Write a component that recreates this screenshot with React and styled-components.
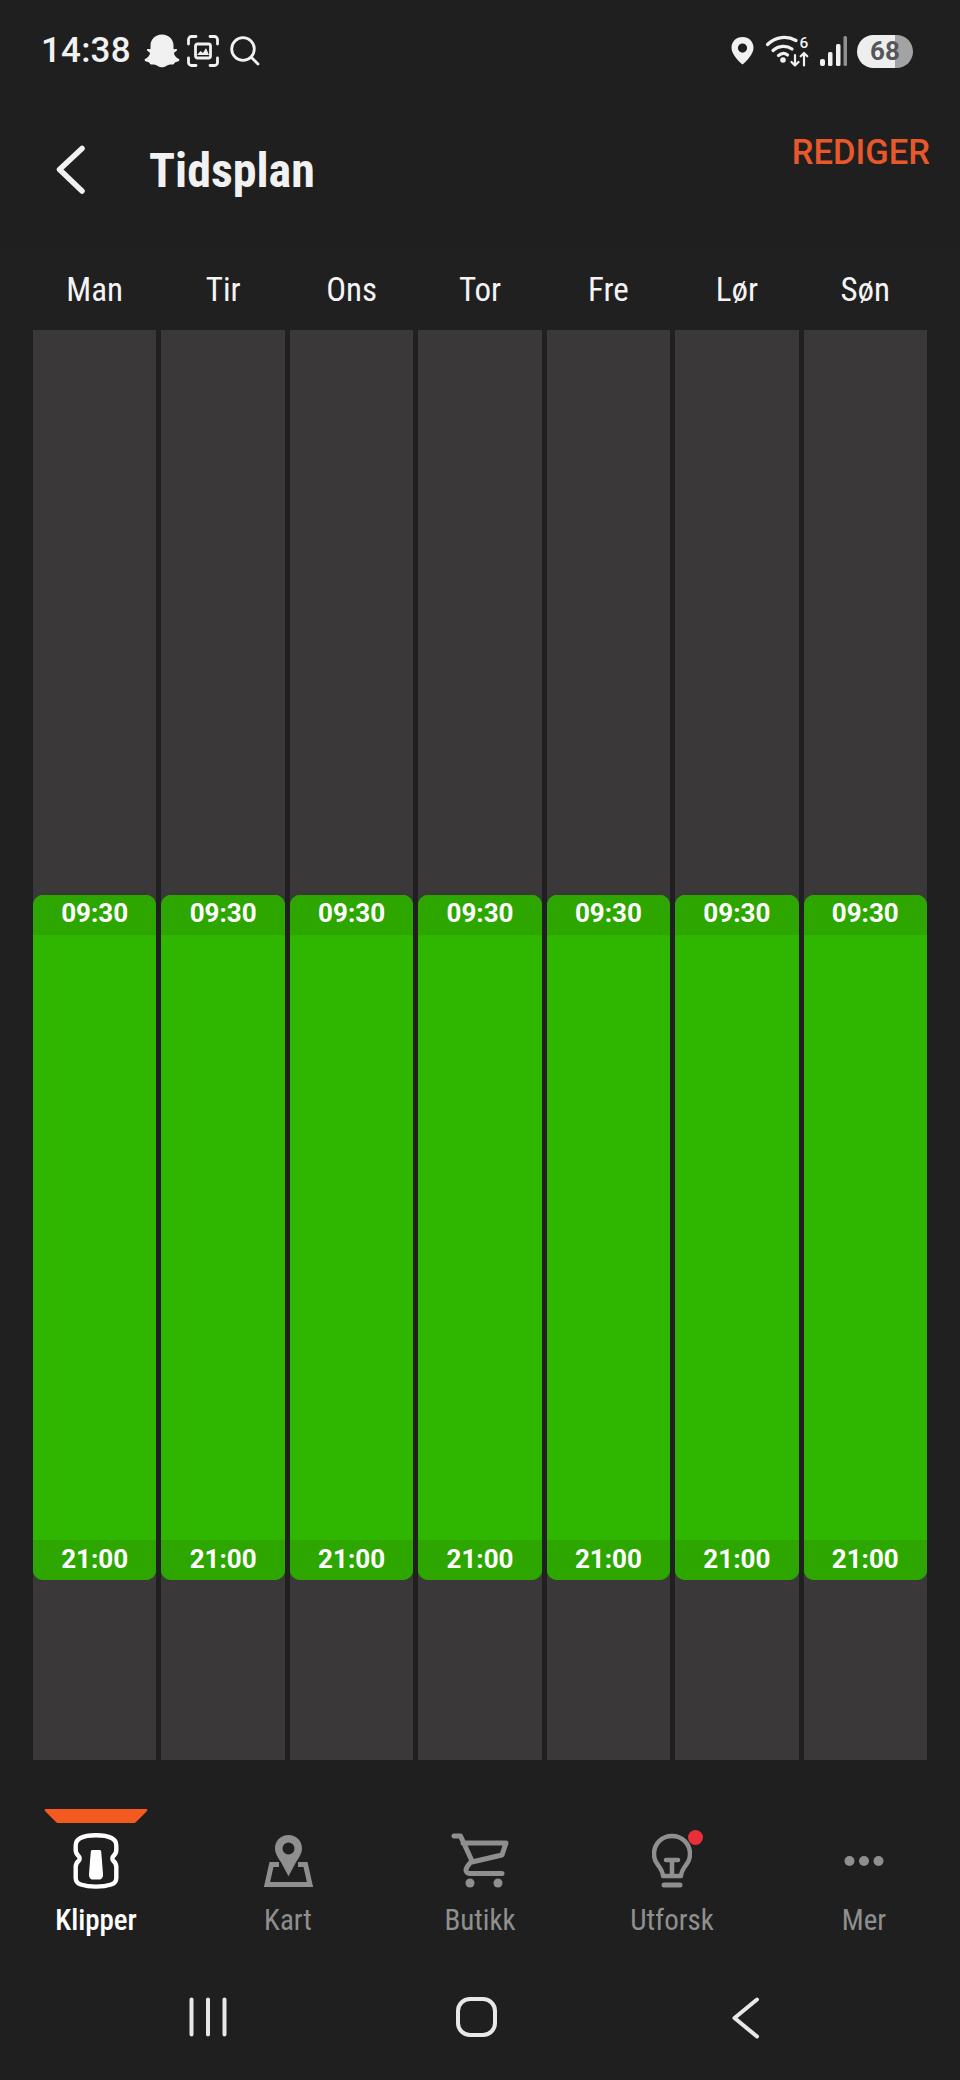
import React from "react";
import styled, { createGlobalStyle } from "styled-components";

const Global = createGlobalStyle`
  html, body { margin: 0; padding: 0; background: #1f1f1f; }
  #root { width: 960px; height: 2080px; overflow: hidden; }
`;

const Screen = styled.div`
  width: 960px; height: 2080px; display: flex; flex-direction: column;
  background: #1f1f1f; font-family: Roboto, "Liberation Sans", sans-serif; color: #f1f1f1;
`;
const StatusBar = styled.div`
  height: 100px; box-sizing: border-box; padding: 34px 47px 0 41px;
  display: flex; align-items: flex-start; justify-content: space-between;
`;
const StatusGroup = styled.div`display: flex; align-items: center; height: 34px;`;
const Clock = styled.span`font-size: 35px; font-weight: 500; line-height: 34px; width: 103px; letter-spacing: 0.2px;`;
const Ic = styled.svg`display: block; flex: none; margin-left: ${p => p.$ml || 0}px;`;
const Battery = styled.div`
  margin-left: 9px; width: 56px; height: 33px; border-radius: 17px; display: flex; align-items: center; justify-content: center;
  background: linear-gradient(90deg, #eeeeee 0 68%, #a3a3a3 68% 100%);
  color: #55555b; font-size: 26px; font-weight: 700;
`;
const Header = styled.div`
  height: 150px; box-sizing: border-box; padding: 0 30px 0 56px; display: flex; align-items: flex-start;
`;
const Back = styled.svg`display: block; margin-top: 45px; flex: none;`;
const Title = styled.h1`
  margin: 43px 0 0 63px; font-family: "Roboto Condensed", "Liberation Sans Narrow", Roboto, sans-serif;
  font-size: 48px; line-height: 56px; font-weight: 700; color: #f1f1f1;
`;
const Edit = styled.span`
  margin: 30px 0 0 auto; font-size: 34.5px; line-height: 44px; font-weight: 500; color: #e8582a;
`;
const Days = styled.div`
  height: 80px; box-sizing: border-box; padding: 0 33px; display: grid; grid-template-columns: repeat(7, 1fr); column-gap: 5px;
  background: #212021;
`;
const Day = styled.div`
  text-align: center; font-family: "Roboto Condensed", "Liberation Sans Narrow", Roboto, sans-serif; font-size: 33px; line-height: 40px; padding-top: 20px; color: #f4f4f4;
`;
const Grid = styled.div`
  height: 1430px; box-sizing: border-box; padding: 0 33px; display: grid; grid-template-columns: repeat(7, 1fr); column-gap: 5px;
  background: #212021;
`;
const Column = styled.div`
  display: flex; flex-direction: column; background: #3a3839;
`;
const Idle = styled.div`height: ${p => p.$h}px; flex: none;`;
const Active = styled.div`
  height: 685px; flex: none; display: flex; flex-direction: column; justify-content: space-between;
  background: #2fb700; border-radius: 10px; overflow: hidden;
`;
const Stamp = styled.div`
  height: 40px; box-sizing: border-box; padding-bottom: ${p => p.$lift}px; display: flex; align-items: center; justify-content: center;
  background: #2da700; color: #fff; font-size: 26px; font-weight: 700;
`;
const Nav = styled.div`
  height: 172px; box-sizing: border-box; padding-top: 49px; display: grid; grid-template-columns: repeat(5, 1fr); background: #1f1f1f;
`;
const Tab = styled.div`
  display: flex; flex-direction: column; align-items: center; position: relative; padding-top: 23px;
  color: ${p => (p.$active ? "#ffffff" : "#8f8f8f")};
`;
const Indicator = styled.svg`position: absolute; top: 0; left: 44px;`;
const IconSlot = styled.div`height: 57px; display: flex; align-items: center; justify-content: center; position: relative;`;
const Dot = styled.span`
  position: absolute; top: -2px; right: -11px; width: 15px; height: 15px; border-radius: 50%; background: #e8303a;
`;
const TabLabel = styled.span`
  margin-top: 13px; font-family: "Roboto Condensed", "Liberation Sans Narrow", Roboto, sans-serif;
  font-size: 29px; line-height: 36px; font-weight: ${p => (p.$active ? 500 : 400)};
`;
const SystemBar = styled.div`
  flex: 1; display: flex; align-items: flex-start; padding-top: 65px; box-sizing: border-box;
`;
const SysSlot = styled.div`margin-left: ${p => p.$ml}px; flex: none;`;

const days = ["Man", "Tir", "Ons", "Tor", "Fre", "Lør", "Søn"];

const Ghost = () => (
  <Ic width="36" height="35" viewBox="0 0 36 35">
    <path fill="#f1f1f1" d="M18 .5c7 0 11.500 5 11.500 11l0 3.500c1.500.5 3-.5 3.500.5.500 1.500-2.500 2.500-3 3.500 0 2 2.500 5 5 6 .8.5.3 2-1 2.500-1.500.5-3 .5-3.500 1.500-.5 1-1 1.500-2.500 1.500-3 0-4.500.5-6.500 2-1.500 1-5.500 1-7 0-2-1.500-3.500-2-6.500-2-1.500 0-2-.5-2.500-1.500-.5-1-2-1-3.500-1.500-1.300-.5-1.800-2-1-2.500 2.500-1 5-4 5-6-.5-1-3.500-2-3-3.500.5-1 2 0 3.500-.5l0-3.500C6.500 5.500 11 .5 18 .5z"/>
  </Ic>
);
const Capture = () => (
  <Ic width="32" height="32" viewBox="0 0 32 32" $ml={7} fill="none" stroke="#f1f1f1" strokeWidth="2.800" strokeLinecap="round">
    <path d="M1.500 9V4.500a3 3 0 0 1 3-3H9M23 1.500h4.500a3 3 0 0 1 3 3V9M30.500 23v4.500a3 3 0 0 1-3 3H23M9 30.500H4.500a3 3 0 0 1-3-3V23"/>
    <rect x="8.500" y="9" width="15" height="14" rx="2"/>
    <path d="M10 20l3.500-4 2.500 2 3-5 3 7z" fill="#f1f1f1" stroke="none"/>
  </Ic>
);
const Search = () => (
  <Ic width="30" height="30" viewBox="0 0 30 30" $ml={11} fill="none" stroke="#f1f1f1" strokeWidth="2.800" strokeLinecap="round">
    <circle cx="13" cy="13" r="11.300"/>
    <path d="M21.500 21.500L28 28"/>
  </Ic>
);
const Pin = () => (
  <Ic width="23" height="28" viewBox="0 0 23 28" fill="#f1f1f1">
    <path fillRule="evenodd" d="M11.500 0C5 0 .5 4.700.5 10.700c0 6.500 6.500 12.800 11 16.800 4.500-4 11-10.300 11-16.800C22.500 4.700 18 0 11.500 0zm0 6.500a4.600 4.600 0 1 1 0 9.200 4.600 4.600 0 0 1 0-9.200z"/>
  </Ic>
);
const Wifi = () => (
  <Ic width="43" height="32" viewBox="0 0 43 32" $ml={12}>
    <g fill="none" stroke="#f1f1f1" strokeWidth="3.200" strokeLinecap="round">
      <path d="M1.500 9.500C10 1.500 21 .5 30 5.500"/>
      <path d="M7 15.500c5.500-5 13.500-5.500 19-1.500"/>
      <path d="M12.500 20.500c3-2.500 6.500-2.500 9-.5"/>
    </g>
    <circle cx="17" cy="25" r="2.800" fill="#f1f1f1"/>
    <g fill="none" stroke="#f1f1f1" strokeWidth="2.200" strokeLinecap="round" strokeLinejoin="round">
      <path d="M29 20v10.500M25.500 27L29 30.500l3.500-3.500"/>
      <path d="M38 30.500V18M34.700 21.300L38 18l3.300 3.300"/>
    </g>
    <text x="33.500" y="13" fontSize="15.500" fontWeight="500" fill="#f1f1f1" fontFamily="Roboto, sans-serif">6</text>
  </Ic>
);
const Signal = () => (
  <Ic width="29" height="31" viewBox="0 0 29 31" $ml={10}>
    <rect x="1" y="23" width="5" height="7" rx="2" fill="#f1f1f1"/>
    <rect x="9" y="16" width="4.500" height="14" rx="1.500" fill="#f1f1f1"/>
    <rect x="17" y="8" width="4.500" height="22" rx="1.500" fill="#f1f1f1"/>
    <rect x="24.500" y="0" width="3.500" height="30" rx="1.500" fill="#8f8f8f"/>
  </Ic>
);

const Mower = () => (
  <svg width="46" height="56" viewBox="0 0 46 56" fill="none">
    <path stroke="#fff" strokeWidth="4.400" strokeLinejoin="round" d="M23 2.300C30 2.300 35 3.200 38.500 5 41.500 6.500 43.300 9 43.300 12.500v4.500c0 2.500-1 4.500-2.800 6-1.500 1.200-1.500 3.800 0 5 1.800 1.500 2.800 3.500 2.800 6v11c0 3.500-2 5.500-5 6.500-8.500 2.800-22 2.800-30.600 0-3-1-5-3-5-6.500v-11c0-2.500 1-4.500 2.800-6 1.500-1.200 1.500-3.800 0-5-1.800-1.500-2.800-3.500-2.800-6v-4.500C2.700 9 4.500 6.500 7.500 5 11 3.200 16 2.300 23 2.300z"/>
    <path fill="#fff" d="M19.500 17h7c1 0 1.500.5 1.700 1.500L30 41c.3 3.500-1.500 5.500-4 5.500h-6c-2.500 0-4.300-2-4-5.500l1.800-22.500c.2-1 .7-1.500 1.700-1.500z"/>
  </svg>
);
const MapIcon = () => (
  <svg width="49" height="52" viewBox="0 0 49 52" fill="none">
    <path stroke="#8f8f8f" strokeWidth="5" d="M15 29.500H7.500L3 49.500H46l-4.500-20H34"/>
    <path fill="#8f8f8f" fillRule="evenodd" d="M24.500 0C17 0 11 5.800 11 13.300c0 5.500 3.500 10 6 14l7.500 14 7.500-14c2.500-4 6-8.500 6-14C38 5.800 32 0 24.500 0zm0 7.500a6 6 0 1 1 0 12 6 6 0 0 1 0-12z"/>
  </svg>
);
const Cart = () => (
  <svg width="58" height="56" viewBox="0 0 58 56" fill="none" stroke="#8f8f8f" strokeLinecap="round" strokeLinejoin="round">
    <path strokeWidth="5" d="M3 3h6.500L21 28c-3 3-6 6-6 9 0 2 1.500 3.500 3.500 3.500H51M12 10h43l-4 12-30 7"/>
    <circle cx="19" cy="50" r="4.500" fill="#8f8f8f" strokeWidth="0"/>
    <circle cx="47" cy="50" r="4.500" fill="#8f8f8f" strokeWidth="0"/>
  </svg>
);
const Bulb = () => (
  <svg width="40" height="56" viewBox="0 0 40 56" fill="none" stroke="#8f8f8f" strokeLinecap="round" strokeLinejoin="round">
    <path strokeWidth="4.500" d="M11 43c0-4-2-7-5-11-2.500-3-4-6.500-4-11C2 10.500 10 3 20 3s18 7.500 18 18c0 4.500-1.500 8-4 11-3 4-5 7-5 11z"/>
    <path strokeWidth="4.500" d="M14 27h12M20 27v15"/>
    <path strokeWidth="5" d="M12 52h16"/>
  </svg>
);
const Dots = () => (
  <svg width="40" height="12" viewBox="0 0 40 12" fill="#8f8f8f">
    <circle cx="5.500" cy="6" r="5"/><circle cx="20" cy="6" r="5"/><circle cx="34.500" cy="6" r="5"/>
  </svg>
);

const tabs = [
  { label: "Klipper", Icon: Mower, active: true },
  { label: "Kart", Icon: MapIcon },
  { label: "Butikk", Icon: Cart },
  { label: "Utforsk", Icon: Bulb, dot: true },
  { label: "Mer", Icon: Dots },
];

export default function App() {
  return (
    <Screen>
      <Global />
      <StatusBar>
        <StatusGroup>
          <Clock>14:38</Clock>
          <Ghost /><Capture /><Search />
        </StatusGroup>
        <StatusGroup>
          <Pin /><Wifi /><Signal />
          <Battery>68</Battery>
        </StatusGroup>
      </StatusBar>
      <Header>
        <Back width="30" height="50" viewBox="0 0 30 50" fill="none" stroke="#f1f1f1" strokeWidth="5.500" strokeLinecap="round" strokeLinejoin="round">
          <path d="M26 3.500L3.500 24.500 26 46"/>
        </Back>
        <Title>Tidsplan</Title>
        <Edit>REDIGER</Edit>
      </Header>
      <Days>{days.map(d => <Day key={d}>{d}</Day>)}</Days>
      <Grid>
        {days.map(d => (
          <Column key={d}>
            <Idle $h={565} />
            <Active>
              <Stamp $lift={4}>09:30</Stamp>
              <Stamp $lift={2}>21:00</Stamp>
            </Active>
          </Column>
        ))}
      </Grid>
      <Nav>
        {tabs.map(({ label, Icon, active, dot }) => (
          <Tab key={label} $active={active}>
            {active && (
              <Indicator width="104" height="14" viewBox="0 0 104 14">
                <path fill="#f35a20" d="M2 0h100c1.500 0 2 1 1 2L92 13c-.7.700-1.200 1-2 1H14c-.8 0-1.300-.3-2-1L1 2C0 1 .5 0 2 0z"/>
              </Indicator>
            )}
            <IconSlot>
              <Icon />
              {dot && <Dot />}
            </IconSlot>
            <TabLabel $active={active}>{label}</TabLabel>
          </Tab>
        ))}
      </Nav>
      <SystemBar>
        <SysSlot $ml={189}>
          <svg width="38" height="40" viewBox="0 0 38 40" fill="none" stroke="#e8e8e8" strokeWidth="4" strokeLinecap="round">
            <path d="M2.500 2.500v35M19 2.500v35M35.500 2.500v35"/>
          </svg>
        </SysSlot>
        <SysSlot $ml={229}>
          <svg width="42" height="40" viewBox="0 0 42 40" fill="none" stroke="#e8e8e8" strokeWidth="4">
            <rect x="2" y="2" width="37" height="36" rx="12"/>
          </svg>
        </SysSlot>
        <SysSlot $ml={234}>
          <svg width="28" height="42" viewBox="0 0 28 42" fill="none" stroke="#e8e8e8" strokeWidth="4" strokeLinecap="round" strokeLinejoin="round">
            <path d="M25 2.500L2.500 21 25 39.500"/>
          </svg>
        </SysSlot>
      </SystemBar>
    </Screen>
  );
}
